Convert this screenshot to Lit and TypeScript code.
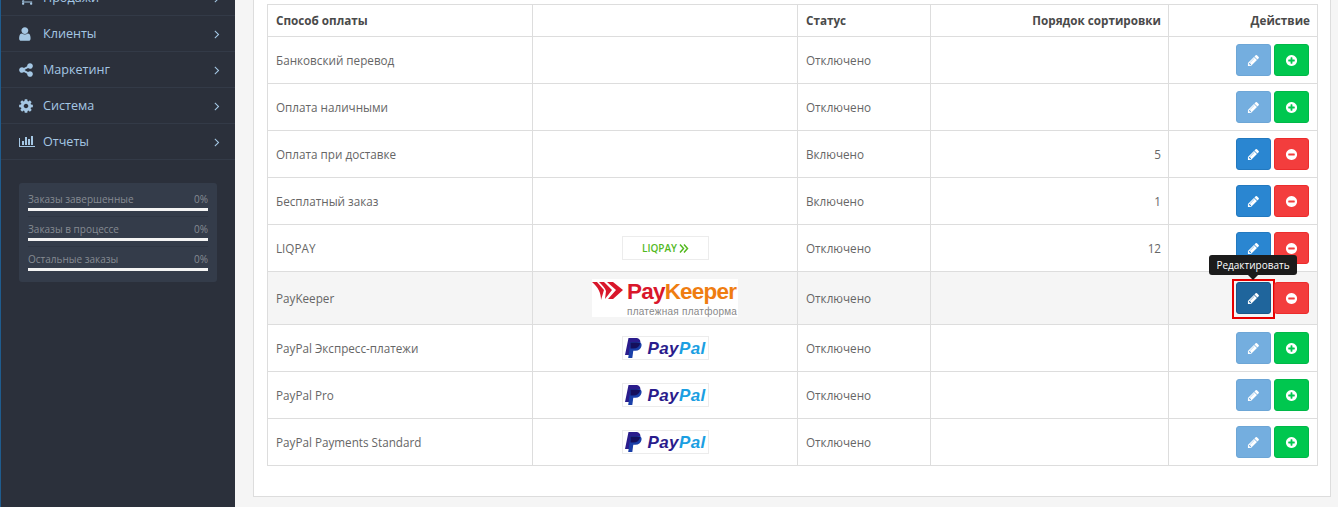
import {html, css, svg, LitElement} from 'lit';
import {customElement} from 'lit/decorators.js';

// box size, path, and an x offset so glyphs line up on the left like the icon font
const ICONS: Record<string, [number, string, number?]> = {
  cart: [1792, 'M704 1536q0 52-38 90t-90 38-90-38-38-90 38-90 90-38 90 38 38 90zm896 0q0 52-38 90t-90 38-90-38-38-90 38-90 90-38 90 38 38 90zm128-1088v512q0 24-16.5 42.5t-40.5 21.5l-1044 122q13 60 13 70 0 16-24 64h920q26 0 45 19t19 45-19 45-45 19h-1024q-26 0-45-19t-19-45q0-11 8-31.5t16-36 21.5-40 15.5-29.5l-177-823h-204q-26 0-45-19t-19-45 19-45 45-19h256q16 0 28.5 6.5t19.5 15.5 13 24.5 8 26 5.5 29.5 4.5 26h1201q26 0 45 19t19 45z'],
  user: [1792, 'M1536 1399q0 109-62.5 187t-150.5 78h-854q-88 0-150.5-78t-62.5-187q0-85 8.5-160.5t31.5-152 58.5-131 94-89 134.5-34.5q131 128 313 128t313-128q76 0 134.5 34.5t94 89 58.5 131 31.5 152 8.5 160.5zm-256-887q0 159-112.5 271.5t-271.5 112.5-271.5-112.5-112.5-271.5 112.5-271.5 271.5-112.5 271.5 112.5 112.5 271.5z', 128],
  share: [1792, 'M1344 1024q133 0 226.5 93.5t93.5 226.5-93.5 226.5-226.5 93.5-226.5-93.5-93.5-226.5q0-12 2-34l-360-180q-92 86-218 86-133 0-226.5-93.5t-93.5-226.5 93.5-226.5 226.5-93.5q126 0 218 86l360-180q-2-22-2-34 0-133 93.5-226.5t226.5-93.5 226.5 93.5 93.5 226.5-93.5 226.5-226.5 93.5q-126 0-218-86l-360 180q2 22 2 34t-2 34l360 180q92-86 218-86z'],
  cog: [1792, 'M1152 896q0-106-75-181t-181-75-181 75-75 181 75 181 181 75 181-75 75-181zm512-109v222q0 12-8 23t-20 13l-185 28q-19 54-39 91 35 50 107 138 10 12 10 25t-9 23q-27 37-99 108t-94 71q-12 0-26-9l-138-108q-44 23-91 38-16 136-29 186-7 28-36 28h-222q-14 0-24.5-8.5t-11.5-21.5l-28-184q-49-16-90-37l-141 107q-10 9-25 9-14 0-25-11-126-114-165-168-7-10-7-23 0-12 8-23 15-21 51-66.5t54-70.5q-27-50-41-99l-183-27q-13-2-21-12.5t-8-23.5v-222q0-12 8-23t19-13l186-28q14-46 39-92-40-57-107-138-10-12-10-24 0-10 9-23 26-36 98.5-107.5t94.5-71.5q13 0 26 10l138 107q44-23 91-38 16-136 29-186 7-28 36-28h222q14 0 24.5 8.5t11.5 21.5l28 184q49 16 90 37l142-107q9-9 24-9 13 0 25 10 129 119 165 170 7 8 7 22 0 12-8 23-15 21-51 66.5t-54 70.5q26 50 41 98l183 28q13 2 21 12.5t8 23.5z'],
  chart: [2048, 'M640 896v512h-256v-512h256zm384-512v1024h-256v-1024h256zm1024 1152v128h-2048v-1152h128v1024h1920zm-640-896v768h-256v-768h256zm384-384v1152h-256v-1152h256z', -128],
  angle: [1792, 'M1171 960q0 13-10 23l-466 466q-10 10-23 10t-23-10l-50-50q-10-10-10-23t10-23l393-393-393-393q-10-10-10-23t10-23l50-50q10-10 23-10t23 10l466 466q10 10 10 23z'],
  pencil: [1792, 'M491 1536l91-91-235-235-91 91v107h128v128h107zm523-928q0-22-22-22-10 0-17 7l-542 542q-7 7-7 17 0 22 22 22 10 0 17-7l542-542q7-7 7-17zm-54-192l416 416-832 832h-416v-416zm683 96q0 53-37 90l-166 166-416-416 166-165q36-38 90-38 53 0 91 38l235 234q37 39 37 91z'],
  plus: [1792, 'M1344 960v-128q0-26-19-45t-45-19h-256v-256q0-26-19-45t-45-19h-128q-26 0-45 19t-19 45v256h-256q-26 0-45 19t-19 45v128q0 26 19 45t45 19h256v256q0 26 19 45t45 19h128q26 0 45-19t19-45v-256h256q26 0 45-19t19-45zm320-64q0 209-103 385.5t-279.5 279.5-385.5 103-385.5-103-279.5-279.5-103-385.5 103-385.5 279.5-279.5 385.5-103 385.5 103 279.5 279.5 103 385.5z'],
  minus: [1792, 'M1344 960v-128q0-26-19-45t-45-19h-768q-26 0-45 19t-19 45v128q0 26 19 45t45 19h768q26 0 45-19t19-45zm320-64q0 209-103 385.5t-279.5 279.5-385.5 103-385.5-103-279.5-279.5-103-385.5 103-385.5 279.5-279.5 385.5-103 385.5 103 279.5 279.5 103 385.5z'],
};

const icon = (name: string, size: number) => {
  const [box, d, dx = 0] = ICONS[name];
  return html`<svg width=${size} height=${size} viewBox="${dx} 0 ${box} ${box}" fill="currentColor">${svg`<path d=${d}></path>`}</svg>`;
};

const MENU = [
  {label: 'Продажи', icon: 'cart'},
  {label: 'Клиенты', icon: 'user'},
  {label: 'Маркетинг', icon: 'share'},
  {label: 'Система', icon: 'cog'},
  {label: 'Отчеты', icon: 'chart'},
];

const STATS = ['Заказы завершенные', 'Заказы в процессе', 'Остальные заказы'];

type Row = {
  name: string;
  logo?: 'liqpay' | 'paykeeper' | 'paypal';
  status: string;
  sort?: number;
  enabled: boolean;
  active?: boolean;
  off?: boolean;
};

const ROWS: Row[] = [
  {name: 'Банковский перевод', status: 'Отключено', enabled: false, off: true},
  {name: 'Оплата наличными', status: 'Отключено', enabled: false, off: true},
  {name: 'Оплата при доставке', status: 'Включено', sort: 5, enabled: true},
  {name: 'Бесплатный заказ', status: 'Включено', sort: 1, enabled: true},
  {name: 'LIQPAY', logo: 'liqpay', status: 'Отключено', sort: 12, enabled: true},
  {name: 'PayKeeper', logo: 'paykeeper', status: 'Отключено', enabled: true, active: true},
  {name: 'PayPal Экспресс-платежи', logo: 'paypal', status: 'Отключено', enabled: false, off: true},
  {name: 'PayPal Pro', logo: 'paypal', status: 'Отключено', enabled: false, off: true},
  {name: 'PayPal Payments Standard', logo: 'paypal', status: 'Отключено', enabled: false, off: true},
];

@customElement('app-root')
export class AppRoot extends LitElement {
  static styles = css`
    :host {
      display: flex;
      height: 507px;
      overflow: hidden;
      background: #f5f5f5;
      font-family: 'Open Sans', sans-serif;
      font-size: 11.7px;
      color: #666;
    }
    svg {
      display: block;
      overflow: visible;
    }
    aside {
      width: 234px;
      flex: none;
      background: #2b303b;
      border-left: 1px solid #1f5c8e;
      overflow: hidden;
    }
    .menu {
      margin-top: -20px;
    }
    .menu-item {
      display: flex;
      align-items: center;
      height: 35px;
      padding: 0 11px 0 17px;
      border-bottom: 1px solid #333a47;
      font-size: 12.6px;
      color: #a5c7e4;
    }
    .menu-icon {
      width: 25px;
      flex: none;
    }
    .menu-item span {
      flex: 1;
    }
    .stats {
      margin: 23px 18px 0 18px;
      padding: 4px 9px 6px;
      background: #343c4a;
      border-radius: 3px;
      font-size: 10px;
      color: #868b92;
    }
    .stat {
      padding-top: 5px;
      height: 24px;
      border-bottom: 1px solid #2f3643;
    }
    .stat:last-child {
      border-bottom: none;
    }
    .stat-head {
      display: flex;
      justify-content: space-between;
      line-height: 15px;
    }
    .stat-bar {
      height: 3px;
      margin-top: 1px;
      background: #f4f4f4;
    }
    main {
      flex: 1;
      min-width: 0;
      padding: 0 7px 0 18px;
    }
    .panel {
      margin-top: -12px;
      height: 509px;
      box-sizing: border-box;
      padding: 15px 14px 0 13px;
      background: #fff;
      border: 1px solid #ddd;
    }
    table {
      width: 1050px;
      table-layout: fixed;
      border-collapse: collapse;
    }
    th,
    td {
      border: 1px solid #ddd;
      padding: 7px 7px 7px 8px;
      line-height: 17px;
      text-align: left;
      vertical-align: middle;
    }
    th {
      color: #4a4a4a;
      font-weight: 700;
    }
    .right {
      text-align: right;
    }
    .center {
      text-align: center;
      padding-left: 0;
      padding-right: 0;
    }
    .hover td {
      background: #f5f5f5;
    }
    td.cell-actions {
      padding-right: 8px;
    }
    .actions {
      display: flex;
      justify-content: flex-end;
      gap: 3px;
    }
    .btn {
      position: relative;
      display: flex;
      align-items: center;
      justify-content: center;
      width: 35px;
      height: 32px;
      box-sizing: border-box;
      border-radius: 3px;
      color: #fff;
    }
    .edit {
      background: #2a86d1;
      border: 1px solid #2379bf;
    }
    .edit.off {
      background: #74aedf;
      border-color: #6da6d6;
    }
    .edit.active {
      background: #1f659c;
      border-color: #1a5686;
    }
    .add {
      background: #00c74f;
      border: 1px solid #00b848;
    }
    .del {
      background: #f33d3d;
      border: 1px solid #ec2c2c;
    }
    .mark {
      position: absolute;
      inset: -4px -5px -6px -5px;
      border: 2px solid #e60000;
    }
    .tip {
      position: absolute;
      left: -28px;
      top: -28px;
      width: 88px;
      height: 20px;
      border-radius: 3px;
      background: #1c1c1c;
      color: #fff;
      font-size: 10px;
      line-height: 20px;
      text-align: center;
      z-index: 2;
    }
    .tip::after {
      content: '';
      position: absolute;
      left: 39px;
      top: 20px;
      border: 5px solid transparent;
      border-top-color: #1c1c1c;
      border-bottom: none;
    }
    .logo {
      display: inline-flex;
      align-items: center;
      vertical-align: middle;
      box-sizing: border-box;
      width: 87px;
      height: 24px;
      background: #fff;
      border: 1px solid #ececec;
    }
    .liqpay {
      justify-content: center;
      gap: 2px;
      padding-left: 1px;
      color: #53b91f;
      font-size: 10px;
      font-weight: 600;
    }
    .paypal {
      padding-left: 2px;
      gap: 6px;
      font-family: 'Liberation Sans', sans-serif;
      font-size: 17px;
      font-weight: 700;
      font-style: italic;
      letter-spacing: 0.4px;
      color: #2a1c8c;
    }
    .paypal b {
      color: #1b9fe2;
    }
    .paykeeper {
      display: inline-block;
      vertical-align: middle;
      width: 146px;
      height: 38px;
      background: #fff;
      font-family: 'Liberation Sans', sans-serif;
      text-align: left;
    }
    .pk-top {
      display: flex;
      align-items: center;
      gap: 4px;
      height: 24px;
      font-size: 22.5px;
      font-weight: 700;
      letter-spacing: -0.8px;
      color: #d9172b;
    }
    .pk-top b {
      color: #ef7d11;
    }
    .pk-sub {
      margin-left: 35px;
      margin-top: 3px;
      font-size: 10px;
      line-height: 11px;
      letter-spacing: 0.25px;
      color: #888;
      white-space: nowrap;
    }
  `;

  renderLogo(logo?: string) {
    if (logo === 'liqpay') {
      return html`<div class="logo liqpay">
        LIQPAY
        <svg width="10" height="9" viewBox="0 0 10 9" fill="none" stroke="currentColor" stroke-width="1.5">
          <path d="M1 .5l3.500 4-3.500 4M5 .5l3.500 4-3.500 4"></path>
        </svg>
      </div>`;
    }
    if (logo === 'paypal') {
      return html`<div class="logo paypal">
        <svg width="17" height="20" viewBox="0 0 17 20">
          <path fill="#2a1c8c" d="M3.500 0h7c3.600 0 5.400 2 4.800 5-.7 3.600-3.300 5.500-7 5.500H6L4.800 17H0z"></path>
          <path fill="#1a3fa8" d="M5.500 4h7.500c2.700 0 4 1.600 3.500 4-.6 3.200-3 4.800-6 4.800H8.300L7.300 20H3.200z"></path>
          <path fill="#150f5c" d="M5.500 4.500h5c1.900 0 4 .4 4.700 1-.8 3-3.200 5-7 5H6.300l-.8 0z"></path>
        </svg>
        <span>Pay<b>Pal</b></span>
      </div>`;
    }
    if (logo === 'paykeeper') {
      return html`<div class="paykeeper">
        <div class="pk-top">
          <svg width="31" height="20" viewBox="0 0 31 20">
            <path fill="#d9172b" d="M0 1h5l7 8-3 10C9 12 6 6 0 1z"></path>
            <path fill="#d9172b" d="M7 1h5l8 8-7 9 1-8C13 7 10 4 7 1z"></path>
            <path fill="#d9172b" d="M15 1h6l10 8-10 9h-5l8-9z"></path>
          </svg>
          <span>Pay<b>Keeper</b></span>
        </div>
        <div class="pk-sub">платежная платформа</div>
      </div>`;
    }
    return '';
  }

  renderActions(row: Row) {
    const cls = `btn edit ${row.off ? 'off' : ''} ${row.active ? 'active' : ''}`;
    return html`<div class="actions">
      <div class=${cls}>
        ${icon('pencil', 13)}
        ${row.active
          ? html`<div class="mark"></div>
              <div class="tip">Редактировать</div>`
          : ''}
      </div>
      ${row.enabled
        ? html`<div class="btn del">${icon('minus', 13)}</div>`
        : html`<div class="btn add">${icon('plus', 13)}</div>`}
    </div>`;
  }

  render() {
    return html`
      <aside>
        <div class="menu">
          ${MENU.map(
            (m) => html`<div class="menu-item">
              <div class="menu-icon">${icon(m.icon, 16)}</div>
              <span>${m.label}</span>
              ${icon('angle', 14)}
            </div>`
          )}
        </div>
        <div class="stats">
          ${STATS.map(
            (s) => html`<div class="stat">
              <div class="stat-head"><span>${s}</span><span>0%</span></div>
              <div class="stat-bar"></div>
            </div>`
          )}
        </div>
      </aside>
      <main>
        <div class="panel">
          <table>
            <colgroup>
              <col style="width:265px" />
              <col style="width:265px" />
              <col style="width:133px" />
              <col style="width:238px" />
              <col style="width:149px" />
            </colgroup>
            <thead>
              <tr>
                <th>Способ оплаты</th>
                <th></th>
                <th>Статус</th>
                <th class="right">Порядок сортировки</th>
                <th class="right">Действие</th>
              </tr>
            </thead>
            <tbody>
              ${ROWS.map(
                (r) => html`<tr class=${r.active ? 'hover' : ''}>
                  <td>${r.name}</td>
                  <td class="center">${this.renderLogo(r.logo)}</td>
                  <td>${r.status}</td>
                  <td class="right">${r.sort ?? ''}</td>
                  <td class="cell-actions">${this.renderActions(r)}</td>
                </tr>`
              )}
            </tbody>
          </table>
        </div>
      </main>
    `;
  }
}
